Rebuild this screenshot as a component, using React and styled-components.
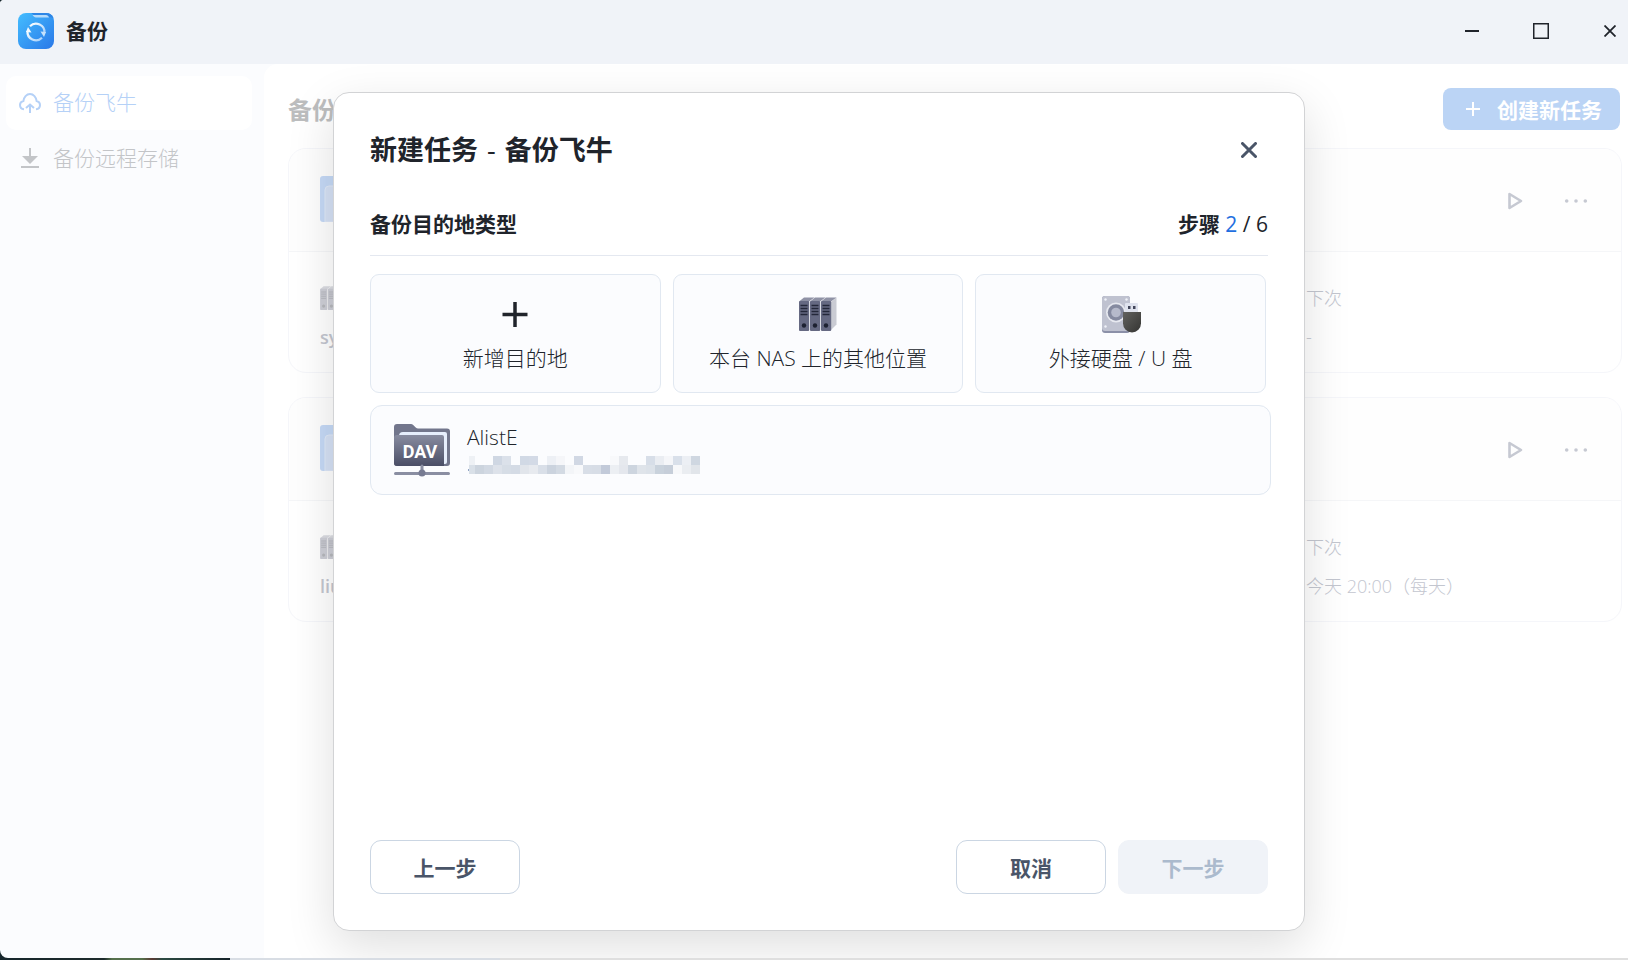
import React from "react";
import styled, { createGlobalStyle } from "styled-components";

const GlobalStyle = createGlobalStyle`
  *, *::before, *::after { box-sizing: border-box; }
  body {
    margin: 0;
    font-family: "Open Sans", "Noto Sans CJK SC", sans-serif;
    font-size: 21px;
    color: #20242b;
    background: linear-gradient(90deg, #16262c 0, #1d2b2c 104px, #55704c 112px, #55704c 142px, #5a3a34 152px, #2c4a42 162px, #16232a 230px, #d8dde4 230px, #d8dde4 500px, #dfdfdf 500px);
  }
  button { font: inherit; color: inherit; border: 0; background: none; padding: 0; margin: 0; }
  h1, h2, h3, p { margin: 0; padding: 0; font-size: inherit; font-weight: inherit; }
  svg { display: block; flex: none; }
`;

const Window = styled.div`
  position: relative;
  display: flex;
  flex-direction: column;
  min-height: calc(100vh - 2px);
  margin-bottom: 2px;
  background: #fbfcfe;
  border-radius: 4px 0 0 8px;
  overflow: hidden;
`;

const TitleBar = styled.header`
  display: flex;
  align-items: center;
  justify-content: space-between;
  height: 64px;
  padding: 0 6px 2px 18px;
  background: #f0f3f8;
`;

const AppName = styled.h1`
  display: flex;
  align-items: center;
  gap: 12px;
  line-height: 28px;
  font-weight: 700;
`;

const WindowControls = styled.div`
  display: flex;
  gap: 45px;
`;

const IconButton = styled.button`
  display: grid;
  place-items: center;
  width: ${(p) => p.$size || 24}px;
  height: ${(p) => p.$size || 24}px;
  color: ${(p) => p.$color || "#20242b"};
`;

const Body = styled.div`
  position: relative;
  display: flex;
  flex: 1;
`;

const Sidebar = styled.nav`
  display: flex;
  flex-direction: column;
  gap: 2px;
  flex: none;
  width: 264px;
  padding: 12px 12px 12px 6px;
`;

const NavItem = styled.a`
  display: flex;
  align-items: center;
  gap: 11px;
  height: 54px;
  padding: 0 12px;
  border-radius: 10px;
  font-weight: 300;
  line-height: 28px;
  text-decoration: none;
  color: ${(p) => (p.$active ? "#b5d1f7" : "#c3c5c8")};
  background: ${(p) => (p.$active ? "#ffffff" : "transparent")};
`;

const NavLabel = styled.span`
  padding-bottom: 2px;
`;

const Main = styled.main`
  display: flex;
  flex: 1;
  flex-direction: column;
  gap: 24px;
  min-width: 0;
  padding: 24px 6px 24px 24px;
  background: #ffffff;
  border-radius: 14px 0 0 0;
`;

const MainHead = styled.div`
  display: flex;
  align-items: center;
  justify-content: space-between;
  margin-bottom: -6px;
  padding-right: 2px;
`;

const MainTitle = styled.h2`
  padding-top: 2px;
  font-size: 24px;
  line-height: 32px;
  font-weight: 700;
  color: #bcbdbe;
`;

const CreateButton = styled.button`
  display: flex;
  align-items: center;
  gap: 16px;
  height: 42px;
  padding: 0 18px 0 22px;
  border-radius: 8px;
  background: #bbd4f5;
  color: #ffffff;
  font-weight: 700;
`;

const TaskCard = styled.article`
  border: 1px solid #f5f6fa;
  border-radius: 18px;
  background: #ffffff;
  overflow: hidden;
`;

const TaskHead = styled.div`
  display: flex;
  align-items: center;
  justify-content: space-between;
  height: 103px;
  padding: 0 33px 2px 31px;
  border-bottom: 1px solid #f5f6f8;
  background: #fefefe;
`;

const TaskActions = styled.div`
  display: flex;
  gap: 38px;
  padding-top: 4px;
`;

const TaskBody = styled.div`
  display: grid;
  grid-template-columns: 1fr 315px;
  height: 120px;
  padding: 34px 0 0 31px;
  font-size: 18px;
  font-weight: 300;
  line-height: 24px;
  color: #c3c6cf;
`;

const TaskColumn = styled.div`
  display: flex;
  flex-direction: column;
  gap: 15px;
`;

const TaskOwner = styled.span`
  font-weight: 600;
`;

const Overlay = styled.div`
  position: absolute;
  inset: 0;
  display: grid;
  place-items: center;
  padding: 28px 0 27px 10px;
`;

const Dialog = styled.section`
  display: flex;
  flex-direction: column;
  width: min(972px, 100%);
  height: 100%;
  padding: 36px;
  border: 1px solid #d2d3d5;
  border-radius: 16px;
  background: #ffffff;
  box-shadow: 0 16px 48px rgba(0, 0, 0, 0.13);
`;

const DialogHead = styled.div`
  display: flex;
  align-items: center;
  justify-content: space-between;
  height: 42px;
`;

const DialogTitle = styled.h2`
  font-size: 27px;
  line-height: 40px;
  font-weight: 700;
`;

const Dash = styled.span`
  padding: 0 2px;
  font-weight: 400;
`;

const StepBar = styled.div`
  display: flex;
  align-items: flex-end;
  justify-content: space-between;
  height: 85px;
  padding-bottom: 16px;
  border-bottom: 1px solid #e4e8f0;
  font-weight: 700;
  line-height: 30px;
`;

const StepCount = styled.span`
  font-weight: 500;
  color: #1f6fe0;
`;

const StepTotal = styled.span`
  font-weight: 500;
`;

const Targets = styled.div`
  display: flex;
  flex: 1;
  flex-direction: column;
  gap: 12px;
  margin-right: -3px;
  padding-top: 18px;
`;

const TargetGrid = styled.div`
  display: grid;
  grid-template-columns: repeat(3, 1fr);
  gap: 12px;
  padding-right: 5px;
`;

const TargetTile = styled.button`
  display: flex;
  flex-direction: column;
  align-items: center;
  gap: 10px;
  height: 119px;
  padding-top: 20px;
  border: 1px solid #e1e8f1;
  border-radius: 9px;
  background: #fbfcfe;
  font-weight: 300;
  line-height: 30px;
`;

const SavedTarget = styled.button`
  display: flex;
  align-items: center;
  gap: 17px;
  height: 90px;
  padding: 0 23px;
  border: 1px solid #e1e8f1;
  border-radius: 12px;
  background: #fbfcfe;
  text-align: left;
`;

const SavedText = styled.span`
  display: flex;
  flex-direction: column;
  gap: 3px;
  padding-bottom: 5px;
  font-size: 21px;
  font-weight: 300;
  line-height: 32px;
`;

const DialogFoot = styled.footer`
  display: flex;
  gap: 12px;
`;

const FootButton = styled.button`
  width: 150px;
  height: 54px;
  margin-right: ${(p) => (p.$push ? "auto" : "0")};
  border: 1px solid ${(p) => (p.disabled ? "#f0f3f8" : "#cbd6e3")};
  border-radius: 11px;
  background: ${(p) => (p.disabled ? "#f0f3f8" : "#ffffff")};
  color: ${(p) => (p.disabled ? "#abbacd" : "#4a5568")};
  font-weight: 700;
`;

const AppLogo = () => (
  <svg width="36" height="36" viewBox="0 0 36 36" aria-hidden="true">
    <defs>
      <linearGradient id="logo" x1="0" y1="0" x2="1" y2="1">
        <stop offset="0" stopColor="#44bdff" />
        <stop offset="1" stopColor="#2a78e8" />
      </linearGradient>
      <linearGradient id="ring" x1="0" y1="0" x2="1" y2="1">
        <stop offset="0" stopColor="#ffffff" />
        <stop offset="1" stopColor="#a5d0fa" />
      </linearGradient>
    </defs>
    <rect width="36" height="36" rx="8" fill="url(#logo)" />
    <path d="M13 0h15a8 8 0 0 1 7.500 5C33 4 31 4 29 4H18c-2 0-3-4-5-4z" fill="#2e86e6" />
    <path d="M14.500 2H28c1.500 0 2.500 1 3 2.500H18c-1.500 0-2.500-1-3.500-2.500z" fill="#b5dbfb" />
    <g fill="none" stroke="url(#ring)" strokeWidth="2.200">
      <path d="M12 13.200A8.500 8.500 0 0 1 26.500 20" />
      <path d="M24 24.800A8.500 8.500 0 0 1 9.500 18" />
    </g>
    <path d="M22.500 18.500l5.500.500-2 5z" fill="#c5e2fc" />
    <path d="M13.500 19.500L8 19l2-5z" fill="#f3faff" />
  </svg>
);

const CloudIcon = () => (
  <svg width="24" height="24" viewBox="0 0 24 24" fill="none" stroke="currentColor" strokeWidth="2" aria-hidden="true">
    <path d="M6 18.300C3.600 18 2 16.200 2 14c0-2.100 1.500-3.700 3.400-4.100C5.800 6.300 8.500 3 12 3s6.200 3.300 6.600 6.900c1.900.4 3.400 2 3.400 4.100 0 2.200-1.600 4-4 4.300" />
    <path d="M12 22v-7.500M8 17l4-3.500 4 3.500" />
  </svg>
);

const DownloadIcon = () => (
  <svg width="24" height="24" viewBox="0 0 24 24" fill="currentColor" aria-hidden="true">
    <path d="M11 1h2v8h7l-8 8-8-8h7zM3 19h18v2H3z" />
  </svg>
);

const Plus = ({ size, stroke }) => (
  <svg width={size} height={size} viewBox={`0 0 ${size} ${size}`} stroke="currentColor" strokeWidth={stroke} aria-hidden="true">
    <path d={`M${size / 2} 1V${size - 1}M1 ${size / 2}H${size - 1}`} />
  </svg>
);

const PlayIcon = () => (
  <svg width="24" height="24" viewBox="0 0 24 24" fill="none" stroke="currentColor" strokeWidth="2.600" strokeLinejoin="round" aria-hidden="true">
    <path d="M7.500 5v14L19 12z" />
  </svg>
);

const DotsIcon = () => (
  <svg width="24" height="24" viewBox="0 0 24 24" fill="currentColor" aria-hidden="true">
    <circle cx="2.700" cy="12" r="1.800" />
    <circle cx="12" cy="12" r="1.800" />
    <circle cx="21.300" cy="12" r="1.800" />
  </svg>
);

const FolderIcon = () => (
  <svg width="56" height="46" viewBox="0 0 56 46" aria-hidden="true">
    <rect width="56" height="46" rx="3" fill="#c5d9f6" />
    <path d="M5 46V14a4 4 0 0 1 4-4h43a4 4 0 0 1 4 4v32z" fill="#d5e1f5" stroke="#e0e9f8" />
  </svg>
);

const ServerIcon = ({ width = 38, height = 34, faded }) => (
  <svg width={width} height={height} viewBox="0 0 38 34" opacity={faded ? 0.32 : 1} aria-hidden="true">
    <path d="M32 5l5.500-4.500v27L32 33z" fill="#c9cbd3" />
    {[0, 11, 22].map((x) => (
      <g key={x} transform={`translate(${x} 0)`}>
        <path d="M0 4.500L5 .5h10.500L10 4.500z" fill="#8f92a5" />
        <rect y="4" width="10.200" height="30" rx="1" fill="#656982" />
        <path d="M1.500 8.500h7M1.500 11.500h7M1.500 14.500h7M1.500 17.500h7" stroke="#24283a" strokeWidth="1.400" />
        <circle cx="5" cy="28.500" r="2.200" fill="#1d2131" />
      </g>
    ))}
  </svg>
);

const DiskIcon = () => (
  <svg width="40" height="38" viewBox="0 0 40 38" aria-hidden="true">
    <defs>
      <linearGradient id="usb" x1="0" y1="0" x2="1" y2="1">
        <stop offset="0" stopColor="#62625f" />
        <stop offset="1" stopColor="#343432" />
      </linearGradient>
    </defs>
    <rect x="1" y="1" width="28" height="37" rx="3" fill="#8b90a8" />
    <rect x="1" y="1" width="28" height="35" rx="3" fill="#bfc2d0" />
    <g fill="#f0f2f8">
      <circle cx="4.500" cy="4.500" r="1.200" />
      <circle cx="25.500" cy="4.500" r="1.200" />
      <circle cx="4.500" cy="31.500" r="1.200" />
    </g>
    <circle cx="15" cy="17.500" r="10" fill="#e7e9f0" />
    <circle cx="15" cy="17.500" r="8.300" fill="#858aa0" />
    <circle cx="15" cy="17.500" r="4.800" fill="#b6bacb" />
    <rect x="24" y="8" width="13" height="10" rx="1" fill="#dfe3ee" />
    <path d="M27 11h2.500v3H27zM32 11h2.500v3H32z" fill="#42465a" />
    <path d="M22 17h18v11.500a9 9 0 0 1-18 0z" fill="url(#usb)" />
  </svg>
);

const DavIcon = () => (
  <svg width="56" height="54" viewBox="0 0 56 54" aria-hidden="true">
    <defs>
      <linearGradient id="dav" x1="0" y1="0" x2="0" y2="1">
        <stop offset="0" stopColor="#888ca0" />
        <stop offset="1" stopColor="#4a4e66" />
      </linearGradient>
    </defs>
    <path d="M0 40V4a3 3 0 0 1 3-3h14c3 0 4 4.500 7 4.500h29a3 3 0 0 1 3 3V40a3 3 0 0 1-3 3H3a3 3 0 0 1-3-3z" fill="#72768c" />
    <path d="M5 13a4 4 0 0 1 4-4h42a2 2 0 0 1 2 2v28a2 2 0 0 1-2 2H5z" fill="#e6eefc" />
    <path d="M0 15a3 3 0 0 1 3-3h45a2 2 0 0 1 2 2v29H3a3 3 0 0 1-3-3z" fill="url(#dav)" />
    <text x="26" y="35" textAnchor="middle" fontFamily="Roboto, sans-serif" fontSize="18" fontWeight="700" fill="#ffffff">DAV</text>
    <path d="M1.500 50.500h53M28 43v7" stroke="#8a8ea2" strokeWidth="3" strokeLinecap="round" />
    <circle cx="28" cy="50" r="3.500" fill="#777b92" />
  </svg>
);

const mosaicRows = [
  "#eef1f5 #fbfcfe #fbfcfe #cfd7e3 #dbe1ea #fbfcfe #d1d9e5 #d3dae6 #fbfcfe #edf0f5 #f5f6f9 #fbfcfe #d1d8e4 #fbfcfe #fbfcfe #fbfcfe #f8f9fb #e6e9ee #fbfcfe #fbfcfe #d7dee8 #eaedf2 #f5f6f9 #d9e0ea #eceff4 #cfd7e1",
  "#d9e0e8 #ccd4de #d2d9e3 #dde2ea #d6dde6 #d4dbe5 #e1e5eb #e7eaef #d9dfe8 #cbd3de #d3dae3 #f3f5f8 #f8f9fb #d8dee7 #d7dde6 #c2cad9 #eceff3 #e4e7ed #cdd5df #dfe4ea #dce2e9 #c9d2dc #c6ced9 #f7f8fa #eaedf1 #e1e5ea",
].map((row) => row.split(" "));

const MaskedAddress = () => (
  <svg width="234" height="18" viewBox="0 0 234 18" shapeRendering="crispEdges" role="img" aria-label="已隐藏的地址">
    {mosaicRows.map((row, y) =>
      row.map((fill, i) => (
        <rect key={`${y}-${i}`} x={i === 0 ? 2 : i * 9 - 1} y={y * 9} width={i === 0 ? 6 : 9} height="9" fill={fill} />
      ))
    )}
    <rect x="1" y="13" width="1" height="2" fill="#8fa3c4" />
  </svg>
);

const tasks = [
  { owner: "sy", next: "-" },
  { owner: "liu", next: "今天 20:00（每天）" },
];

function Task({ owner, next }) {
  return (
    <TaskCard>
      <TaskHead>
        <FolderIcon />
        <TaskActions>
          <IconButton $color="#c6c9d2" aria-label="运行"><PlayIcon /></IconButton>
          <IconButton $color="#c6c9d2" aria-label="更多"><DotsIcon /></IconButton>
        </TaskActions>
      </TaskHead>
      <TaskBody>
        <TaskColumn>
          <ServerIcon width={27} height={24} faded />
          <TaskOwner>{owner}</TaskOwner>
        </TaskColumn>
        <TaskColumn>
          <span>下次</span>
          <span>{next}</span>
        </TaskColumn>
      </TaskBody>
    </TaskCard>
  );
}

export default function App() {
  return (
    <>
      <GlobalStyle />
      <Window>
        <TitleBar>
          <AppName><AppLogo />备份</AppName>
          <WindowControls>
            <IconButton aria-label="最小化">
              <svg width="14" height="2" viewBox="0 0 14 2"><path d="M0 1h14" stroke="currentColor" strokeWidth="2" /></svg>
            </IconButton>
            <IconButton aria-label="最大化">
              <svg width="16" height="16" viewBox="0 0 16 16"><rect x=".75" y=".75" width="14.500" height="14.500" fill="none" stroke="currentColor" strokeWidth="1.500" /></svg>
            </IconButton>
            <IconButton aria-label="关闭">
              <svg width="12" height="12" viewBox="0 0 12 12"><path d="M.5.5l11 11M11.500.5l-11 11" stroke="currentColor" strokeWidth="1.800" /></svg>
            </IconButton>
          </WindowControls>
        </TitleBar>
        <Body>
          <Sidebar>
            <NavItem href="#local" $active><CloudIcon /><NavLabel>备份飞牛</NavLabel></NavItem>
            <NavItem href="#remote"><DownloadIcon /><NavLabel>备份远程存储</NavLabel></NavItem>
          </Sidebar>
          <Main>
            <MainHead>
              <MainTitle>备份</MainTitle>
              <CreateButton><Plus size={16} stroke={2} />创建新任务</CreateButton>
            </MainHead>
            {tasks.map((task) => <Task key={task.owner} {...task} />)}
          </Main>
          <Overlay>
            <Dialog role="dialog" aria-modal="true" aria-labelledby="dialog-title">
              <DialogHead>
                <DialogTitle id="dialog-title">新建任务<Dash> - </Dash>备份飞牛</DialogTitle>
                <IconButton $size={38} $color="#4a5568" aria-label="关闭对话框">
                  <svg width="16" height="16" viewBox="0 0 16 16"><path d="M1.500 1.500l13 13M14.500 1.500l-13 13" stroke="currentColor" strokeWidth="3" strokeLinecap="round" /></svg>
                </IconButton>
              </DialogHead>
              <StepBar>
                <h3>备份目的地类型</h3>
                <p>步骤 <StepCount>2</StepCount><StepTotal> / 6</StepTotal></p>
              </StepBar>
              <Targets>
                <TargetGrid>
                  <TargetTile>
                    <svg width="40" height="38" viewBox="0 0 40 38" aria-hidden="true"><path d="M20 7v25M7.500 19.500h25" stroke="#20242b" strokeWidth="3.500" /></svg>
                    新增目的地
                  </TargetTile>
                  <TargetTile><ServerIcon height={38} />本台 NAS 上的其他位置</TargetTile>
                  <TargetTile><DiskIcon />外接硬盘 / U 盘</TargetTile>
                </TargetGrid>
                <SavedTarget>
                  <DavIcon />
                  <SavedText>AlistE<MaskedAddress /></SavedText>
                </SavedTarget>
              </Targets>
              <DialogFoot>
                <FootButton $push>上一步</FootButton>
                <FootButton>取消</FootButton>
                <FootButton disabled>下一步</FootButton>
              </DialogFoot>
            </Dialog>
          </Overlay>
        </Body>
      </Window>
    </>
  );
}
